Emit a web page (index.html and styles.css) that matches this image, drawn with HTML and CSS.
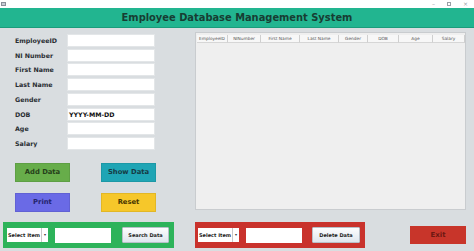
FILE: index.html
```html
<!DOCTYPE html>
<html>
<head>
<meta charset="utf-8">
<link rel="stylesheet" href="styles.css">
</head>
<body>
<div class="app">
  <div class="titlebar">
    <span class="appicon"></span>
    <div class="controls"><span>&#8211;</span><span class="max"></span><span>&#215;</span></div>
  </div>
  <div class="header">Employee Database Management System</div>
  <div class="main">
    <div class="top">
      <div class="left">
        <div class="form">
          <label>EmployeeID</label><div class="inp"></div>
          <label>NI Number</label><div class="inp"></div>
          <label>First Name</label><div class="inp"></div>
          <label>Last Name</label><div class="inp"></div>
          <label>Gender</label><div class="inp"></div>
          <label>DOB</label><div class="inp dob">YYYY-MM-DD</div>
          <label>Age</label><div class="inp"></div>
          <label>Salary</label><div class="inp"></div>
        </div>
        <div class="buttons">
          <div class="btn add">Add Data</div>
          <div class="btn show">Show Data</div>
          <div class="btn print">Print</div>
          <div class="btn reset">Reset</div>
        </div>
      </div>
      <div class="tablepanel">
        <div class="thead">
          <div class="th c1">EmployeeID</div>
          <div class="th c2">NINumber</div>
          <div class="th c3">First Name</div>
          <div class="th c4">Last Name</div>
          <div class="th c5">Gender</div>
          <div class="th c6">DOB</div>
          <div class="th c7">Age</div>
          <div class="th c8">Salary</div>
        </div>
      </div>
    </div>
    <div class="bottom">
      <div class="panel green">
        <div class="combo"><span class="ctext">Select Item</span><span class="arrow">&#9662;</span></div>
        <div class="sinp"></div>
        <div class="sbtn search">Search Data</div>
      </div>
      <div class="panel red">
        <div class="combo"><span class="ctext">Select Item</span><span class="arrow">&#9662;</span></div>
        <div class="sinp"></div>
        <div class="sbtn delete">Delete Data</div>
      </div>
      <div class="exit">Exit</div>
    </div>
  </div>
</div>
</body>
</html>
```
FILE: styles.css
```css
html, body {
  margin: 0;
  padding: 0;
}
body {
  width: 474px;
  height: 251px;
  overflow: hidden;
  font-family: "DejaVu Sans", Verdana, sans-serif;
}
.app {
  width: 474px;
  height: 251px;
  display: flex;
  flex-direction: column;
  background: #d9dde0;
}
.titlebar {
  height: 8px;
  background: #ffffff;
  display: flex;
  justify-content: space-between;
  align-items: center;
}
.appicon {
  width: 5px;
  height: 4px;
  margin-left: 1px;
  border: 1px solid #8a8f99;
  background: #c8ccd4;
  box-sizing: border-box;
}
.controls {
  display: flex;
  align-items: center;
  gap: 12px;
  margin-right: 6px;
  color: #9aa0a6;
  font-size: 6px;
  line-height: 8px;
}
.controls .max {
  width: 4px;
  height: 4px;
  border: 1px solid #9aa0a6;
  box-sizing: border-box;
}
.header {
  height: 20px;
  background: #22b590;
  color: #173d33;
  font-weight: bold;
  font-size: 9.9px;
  line-height: 20px;
  text-align: center;
  border-bottom: 1px solid #1a9c7b;
  box-sizing: border-box;
}
.main {
  flex: 1;
  display: flex;
  flex-direction: column;
}
.top {
  height: 194px;
  display: flex;
}
.left {
  width: 195px;
  padding: 6px 0 0 15px;
  box-sizing: border-box;
}
.form {
  display: grid;
  grid-template-columns: 52px 88px;
  grid-auto-rows: 13px;
  row-gap: 1.71px;
}
.form label {
  font-weight: bold;
  font-size: 6.3px;
  color: #2a2e33;
  line-height: 14px;
}
.inp {
  background: #ffffff;
  border: 1px solid #e3e6e8;
  box-sizing: border-box;
}
.inp.dob {
  font-weight: bold;
  font-size: 6.3px;
  line-height: 11px;
  padding-left: 1px;
  color: #111;
}
.buttons {
  margin-top: 13px;
  display: grid;
  grid-template-columns: 55px 55px;
  grid-auto-rows: 19px;
  column-gap: 31px;
  row-gap: 11px;
}
.btn {
  font-weight: bold;
  font-size: 6.8px;
  display: flex;
  align-items: center;
  justify-content: center;
  box-sizing: border-box;
  border: 1px solid rgba(0,0,0,0.08);
}
.btn.add { background: #67ad4a; color: #25401a; }
.btn.show { background: #1fa5b5; color: #163b45; }
.btn.print { background: #6a6ae6; color: #25256e; }
.btn.reset { background: #f6c72a; color: #4a3800; }
.tablepanel {
  margin-top: 4px;
  width: 271px;
  height: 178px;
  background: #efefef;
  border: 1px solid #c9cccf;
  box-sizing: border-box;
  padding: 2px 0 0 1px;
}
.thead {
  display: flex;
  height: 8px;
}
.th {
  font-size: 4.3px;
  line-height: 8px;
  text-align: center;
  color: #555;
  background: #f7f7f7;
  border-right: 1px solid #cfcfcf;
  border-bottom: 1px solid #d6d6d6;
  box-sizing: border-box;
  white-space: nowrap;
  overflow: hidden;
}
.c1 { width: 31px; }
.c2 { width: 33px; }
.c3 { width: 39px; }
.c4 { width: 39px; }
.c5 { width: 29px; }
.c6 { width: 31px; }
.c7 { width: 34px; }
.c8 { width: 32px; }
.bottom {
  display: flex;
  align-items: flex-start;
}
.panel {
  height: 26px;
  display: flex;
  align-items: center;
  box-sizing: border-box;
}
.panel.green {
  margin-left: 3px;
  width: 171px;
  background: #2db35a;
  padding-left: 4px;
}
.panel.red {
  margin-left: 21px;
  width: 170px;
  background: #c9322c;
  padding-left: 3px;
}
.combo {
  width: 41px;
  height: 14px;
  background: #ffffff;
  display: flex;
  box-sizing: border-box;
}
.ctext {
  flex: 1;
  font-weight: bold;
  font-size: 5px;
  line-height: 14px;
  padding-left: 1px;
  color: #222;
  white-space: nowrap;
}
.arrow {
  width: 6px;
  border-left: 1px solid #c8c8c8;
  font-size: 4px;
  line-height: 14px;
  text-align: center;
  color: #333;
}
.sinp {
  margin-left: 7px;
  width: 56px;
  height: 15px;
  background: #ffffff;
}
.sbtn {
  height: 16px;
  font-weight: bold;
  font-size: 5px;
  display: flex;
  align-items: center;
  justify-content: center;
  color: #222;
  background: linear-gradient(#fdfdfe, #dfe6ee);
  border: 1px solid #b8c0c8;
  box-sizing: border-box;
  border-radius: 1px;
}
.sbtn.search { margin-left: 11px; width: 47px; }
.sbtn.delete { margin-left: 10px; width: 48px; }
.exit {
  margin-left: 45px;
  margin-top: 4px;
  width: 56px;
  height: 18px;
  background: #c8352a;
  color: #6e1812;
  font-weight: bold;
  font-size: 7px;
  display: flex;
  align-items: center;
  justify-content: center;
}
```
